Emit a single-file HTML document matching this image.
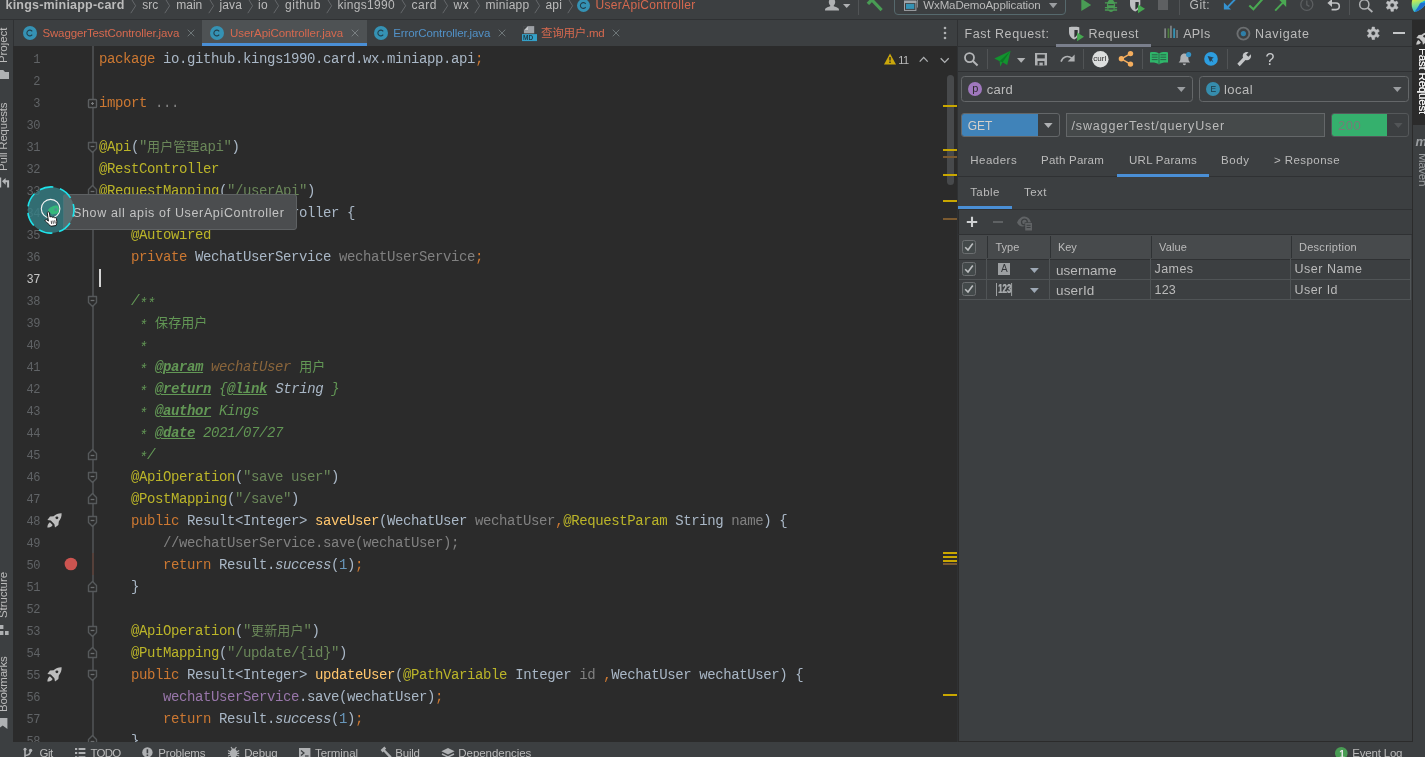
<!DOCTYPE html>
<html><head><meta charset="utf-8"><title>IDE</title><style>
html,body{margin:0;padding:0;background:#2b2b2b;}
body{width:1425px;height:757px;overflow:hidden;position:relative;font-family:"Liberation Sans","Noto Sans CJK SC",sans-serif;will-change:transform;}
.b{position:absolute;display:block}
.t{position:absolute;white-space:pre;display:block;line-height:30px}
svg{overflow:visible}

.cl{position:absolute;left:99px;height:22px;line-height:22px;white-space:pre;font-family:"Liberation Mono","Noto Sans CJK SC",monospace;font-size:14px;letter-spacing:-0.4px;color:#a9b7c6;}
.cl i{font-style:normal} .cl em.as{font-style:inherit;position:relative;top:3px} .cl b.z{font-weight:normal;font-style:normal;font-size:13px;letter-spacing:0.1px}
.cl .k{color:#cc7832} .cl .a{color:#bbb529} .cl .s{color:#6a8759} .cl .c{color:#808080} .cl .u{color:#808080}
.cl .d{color:#629755;font-style:italic} .cl .dt{color:#629755;font-style:italic;font-weight:bold;text-decoration:underline}
.cl .dp{color:#8a653b;font-style:italic} .cl .dl{color:#a9b7c6;font-style:italic}
.cl .m{color:#ffc66d} .cl .n{color:#6897bb} .cl .f{color:#9876aa} .cl .st{font-style:italic}
.ln{position:absolute;left:14px;width:26.2px;text-align:right;height:22px;line-height:22px;font-family:"Liberation Mono","Noto Sans CJK SC",monospace;font-size:12px;letter-spacing:-0.3px;color:#606366;white-space:pre}
</style></head>
<body>
<div class="b" style="left:14px;top:46px;width:944px;height:696px;background:#2b2b2b;"></div>
<div class="b" style="left:92.2px;top:46px;width:1.7px;height:696px;background:#484a4c;"></div>
<div class="b" style="left:92.2px;top:553px;width:1.7px;height:22px;background:#55403a;"></div>
<div class="ln" style="top:48.5px;color:#606366">1</div>
<div class="cl" style="top:48px"><i class="k">package </i>io.github.kings1990.card.wx.miniapp.api<i class="k">;</i></div>
<div class="ln" style="top:70.5px;color:#606366">2</div>
<div class="ln" style="top:92.5px;color:#606366">3</div>
<div class="cl" style="top:92px"><i class="k">import </i><i class="c">...</i></div>
<div class="ln" style="top:114.5px;color:#606366">30</div>
<div class="ln" style="top:136.5px;color:#606366">31</div>
<div class="cl" style="top:136px"><i class="a">@Api</i>(<i class="s">"<b class="z">用户管理</b>api"</i>)</div>
<div class="ln" style="top:158.5px;color:#606366">32</div>
<div class="cl" style="top:158px"><i class="a">@RestController</i></div>
<div class="ln" style="top:180.5px;color:#606366">33</div>
<div class="cl" style="top:180px"><i class="a">@RequestMapping</i>(<i class="s">"/userApi"</i>)</div>
<div class="ln" style="top:202.5px;color:#606366">34</div>
<div class="cl" style="top:202px"><i class="k">public class </i>UserApiController {</div>
<div class="ln" style="top:224.5px;color:#606366">35</div>
<div class="cl" style="top:224px">    <i class="a">@Autowired</i></div>
<div class="ln" style="top:246.5px;color:#606366">36</div>
<div class="cl" style="top:246px">    <i class="k">private </i>WechatUserService <i class="u">wechatUserService</i><i class="k">;</i></div>
<div class="ln" style="top:268.5px;color:#c4c4c4">37</div>
<div class="ln" style="top:290.5px;color:#606366">38</div>
<div class="cl" style="top:290px">    <i class="d">/<em class="as">*</em><em class="as">*</em></i></div>
<div class="ln" style="top:312.5px;color:#606366">39</div>
<div class="cl" style="top:312px">    <i class="d"> <em class="as">*</em> <b class="z">保存用户</b></i></div>
<div class="ln" style="top:334.5px;color:#606366">40</div>
<div class="cl" style="top:334px">    <i class="d"> <em class="as">*</em></i></div>
<div class="ln" style="top:356.5px;color:#606366">41</div>
<div class="cl" style="top:356px">    <i class="d"> <em class="as">*</em> </i><i class="dt">@param</i><i class="d"> </i><i class="dp">wechatUser</i><i class="d"> <b class="z">用户</b></i></div>
<div class="ln" style="top:378.5px;color:#606366">42</div>
<div class="cl" style="top:378px">    <i class="d"> <em class="as">*</em> </i><i class="dt">@return</i><i class="d"> {</i><i class="dt">@link</i><i class="d"> </i><i class="dl">String</i><i class="d"> }</i></div>
<div class="ln" style="top:400.5px;color:#606366">43</div>
<div class="cl" style="top:400px">    <i class="d"> <em class="as">*</em> </i><i class="dt">@author</i><i class="d"> Kings</i></div>
<div class="ln" style="top:422.5px;color:#606366">44</div>
<div class="cl" style="top:422px">    <i class="d"> <em class="as">*</em> </i><i class="dt">@date</i><i class="d"> 2021/07/27</i></div>
<div class="ln" style="top:444.5px;color:#606366">45</div>
<div class="cl" style="top:444px">    <i class="d"> <em class="as">*</em>/</i></div>
<div class="ln" style="top:466.5px;color:#606366">46</div>
<div class="cl" style="top:466px">    <i class="a">@ApiOperation</i>(<i class="s">"save user"</i>)</div>
<div class="ln" style="top:488.5px;color:#606366">47</div>
<div class="cl" style="top:488px">    <i class="a">@PostMapping</i>(<i class="s">"/save"</i>)</div>
<div class="ln" style="top:510.5px;color:#606366">48</div>
<div class="cl" style="top:510px">    <i class="k">public </i>Result&lt;Integer&gt; <i class="m">saveUser</i>(WechatUser <i class="u">wechatUser</i><i class="k">,</i><i class="a">@RequestParam</i> String <i class="u">name</i>) {</div>
<div class="ln" style="top:532.5px;color:#606366">49</div>
<div class="cl" style="top:532px">        <i class="c">//wechatUserService.save(wechatUser);</i></div>
<div class="ln" style="top:554.5px;color:#606366">50</div>
<div class="cl" style="top:554px">        <i class="k">return </i>Result.<i class="st">success</i>(<i class="n">1</i>)<i class="k">;</i></div>
<div class="ln" style="top:576.5px;color:#606366">51</div>
<div class="cl" style="top:576px">    }</div>
<div class="ln" style="top:598.5px;color:#606366">52</div>
<div class="ln" style="top:620.5px;color:#606366">53</div>
<div class="cl" style="top:620px">    <i class="a">@ApiOperation</i>(<i class="s">"<b class="z">更新用户</b>"</i>)</div>
<div class="ln" style="top:642.5px;color:#606366">54</div>
<div class="cl" style="top:642px">    <i class="a">@PutMapping</i>(<i class="s">"/update/{id}"</i>)</div>
<div class="ln" style="top:664.5px;color:#606366">55</div>
<div class="cl" style="top:664px">    <i class="k">public </i>Result&lt;Integer&gt; <i class="m">updateUser</i>(<i class="a">@PathVariable</i> Integer <i class="u">id</i> <i class="k">,</i>WechatUser wechatUser) {</div>
<div class="ln" style="top:686.5px;color:#606366">56</div>
<div class="cl" style="top:686px">        <i class="f">wechatUserService</i>.save(wechatUser)<i class="k">;</i></div>
<div class="ln" style="top:708.5px;color:#606366">57</div>
<div class="cl" style="top:708px">        <i class="k">return </i>Result.<i class="st">success</i>(<i class="n">1</i>)<i class="k">;</i></div>
<div class="ln" style="top:730.5px;color:#606366">58</div>
<div class="cl" style="top:730px">    }</div>
<div class="b" style="left:99.2px;top:269px;width:1.9px;height:18px;background:#d4d4d4;"></div>
<svg class="b" style="left:88.4px;top:99px;" width="9" height="9" viewBox="0 0 9 9"><rect x="0.5" y="0.5" width="8" height="8" rx="0.8" fill="#2b2b2b" stroke="#5c5f61" stroke-width="1.4"/><path d="M3 4.5H6M4.5 3V6" stroke="#77797b" stroke-width="1.2"/></svg>
<svg class="b" style="left:88.4px;top:142.3px;" width="9" height="11" viewBox="0 0 9 11"><path d="M0.5 0.5H8.5V6.5L4.5 10.5L0.5 6.5Z" fill="#2b2b2b" stroke="#56595b" stroke-width="1.4" stroke-linejoin="round"/><path d="M2.6 4.5H6.4" stroke="#6a6d6f" stroke-width="1.3"/></svg>
<svg class="b" style="left:88.4px;top:296.3px;" width="9" height="11" viewBox="0 0 9 11"><path d="M0.5 0.5H8.5V6.5L4.5 10.5L0.5 6.5Z" fill="#2b2b2b" stroke="#56595b" stroke-width="1.4" stroke-linejoin="round"/><path d="M2.6 4.5H6.4" stroke="#6a6d6f" stroke-width="1.3"/></svg>
<svg class="b" style="left:88.4px;top:472.3px;" width="9" height="11" viewBox="0 0 9 11"><path d="M0.5 0.5H8.5V6.5L4.5 10.5L0.5 6.5Z" fill="#2b2b2b" stroke="#56595b" stroke-width="1.4" stroke-linejoin="round"/><path d="M2.6 4.5H6.4" stroke="#6a6d6f" stroke-width="1.3"/></svg>
<svg class="b" style="left:88.4px;top:516.3px;" width="9" height="11" viewBox="0 0 9 11"><path d="M0.5 0.5H8.5V6.5L4.5 10.5L0.5 6.5Z" fill="#2b2b2b" stroke="#56595b" stroke-width="1.4" stroke-linejoin="round"/><path d="M2.6 4.5H6.4" stroke="#6a6d6f" stroke-width="1.3"/></svg>
<svg class="b" style="left:88.4px;top:626.3px;" width="9" height="11" viewBox="0 0 9 11"><path d="M0.5 0.5H8.5V6.5L4.5 10.5L0.5 6.5Z" fill="#2b2b2b" stroke="#56595b" stroke-width="1.4" stroke-linejoin="round"/><path d="M2.6 4.5H6.4" stroke="#6a6d6f" stroke-width="1.3"/></svg>
<svg class="b" style="left:88.4px;top:670.3px;" width="9" height="11" viewBox="0 0 9 11"><path d="M0.5 0.5H8.5V6.5L4.5 10.5L0.5 6.5Z" fill="#2b2b2b" stroke="#56595b" stroke-width="1.4" stroke-linejoin="round"/><path d="M2.6 4.5H6.4" stroke="#6a6d6f" stroke-width="1.3"/></svg>
<svg class="b" style="left:88.4px;top:184.5px;" width="9" height="11" viewBox="0 0 9 11"><path d="M0.5 10.5H8.5V4.5L4.5 0.5L0.5 4.5Z" fill="#2b2b2b" stroke="#56595b" stroke-width="1.4" stroke-linejoin="round"/><path d="M2.6 6.5H6.4" stroke="#6a6d6f" stroke-width="1.3"/></svg>
<svg class="b" style="left:88.4px;top:448.5px;" width="9" height="11" viewBox="0 0 9 11"><path d="M0.5 10.5H8.5V4.5L4.5 0.5L0.5 4.5Z" fill="#2b2b2b" stroke="#56595b" stroke-width="1.4" stroke-linejoin="round"/><path d="M2.6 6.5H6.4" stroke="#6a6d6f" stroke-width="1.3"/></svg>
<svg class="b" style="left:88.4px;top:492.5px;" width="9" height="11" viewBox="0 0 9 11"><path d="M0.5 10.5H8.5V4.5L4.5 0.5L0.5 4.5Z" fill="#2b2b2b" stroke="#56595b" stroke-width="1.4" stroke-linejoin="round"/><path d="M2.6 6.5H6.4" stroke="#6a6d6f" stroke-width="1.3"/></svg>
<svg class="b" style="left:88.4px;top:580.5px;" width="9" height="11" viewBox="0 0 9 11"><path d="M0.5 10.5H8.5V4.5L4.5 0.5L0.5 4.5Z" fill="#2b2b2b" stroke="#56595b" stroke-width="1.4" stroke-linejoin="round"/><path d="M2.6 6.5H6.4" stroke="#6a6d6f" stroke-width="1.3"/></svg>
<svg class="b" style="left:88.4px;top:646.5px;" width="9" height="11" viewBox="0 0 9 11"><path d="M0.5 10.5H8.5V4.5L4.5 0.5L0.5 4.5Z" fill="#2b2b2b" stroke="#56595b" stroke-width="1.4" stroke-linejoin="round"/><path d="M2.6 6.5H6.4" stroke="#6a6d6f" stroke-width="1.3"/></svg>
<svg class="b" style="left:88.4px;top:734.5px;" width="9" height="11" viewBox="0 0 9 11"><path d="M0.5 10.5H8.5V4.5L4.5 0.5L0.5 4.5Z" fill="#2b2b2b" stroke="#56595b" stroke-width="1.4" stroke-linejoin="round"/><path d="M2.6 6.5H6.4" stroke="#6a6d6f" stroke-width="1.3"/></svg>
<svg class="b" style="left:46.6px;top:512.6px;" width="15" height="15" viewBox="0 0 15 15"><path d="M14.6 0.3C11.5 0.2 8.8 1.2 6.6 3.2L3 3.6L0.4 7L3.8 7.6L7.4 11.2L8 14.6L11.4 12L11.8 8.4C13.8 6.2 14.8 3.4 14.6 0.3Z" fill="#bdbdbd"/><circle cx="9.9" cy="4.85" r="1.45" fill="#2b2b2b"/><path d="M2.9 9.2L5.6 12C4.8 13.8 2.6 14.5 0.3 14.6C0.4 12.2 1.2 10.2 2.9 9.2Z" fill="#bdbdbd"/></svg>
<svg class="b" style="left:46.6px;top:666.6px;" width="15" height="15" viewBox="0 0 15 15"><path d="M14.6 0.3C11.5 0.2 8.8 1.2 6.6 3.2L3 3.6L0.4 7L3.8 7.6L7.4 11.2L8 14.6L11.4 12L11.8 8.4C13.8 6.2 14.8 3.4 14.6 0.3Z" fill="#bdbdbd"/><circle cx="9.9" cy="4.85" r="1.45" fill="#2b2b2b"/><path d="M2.9 9.2L5.6 12C4.8 13.8 2.6 14.5 0.3 14.6C0.4 12.2 1.2 10.2 2.9 9.2Z" fill="#bdbdbd"/></svg>
<svg class="b" style="left:64px;top:557px;" width="14" height="14" viewBox="0 0 14 14"><circle cx="6.9" cy="7" r="6.3" fill="#cc5450"/></svg>
<div class="b" style="left:947px;top:75px;width:7.3px;height:110px;background:#47494b;border-radius:3.6px;"></div>
<div class="b" style="left:943px;top:105px;width:14px;height:2px;background:#c9a700;"></div>
<div class="b" style="left:943px;top:149px;width:14px;height:2px;background:#c9a700;"></div>
<div class="b" style="left:943px;top:156px;width:14px;height:2px;background:#7b5a30;"></div>
<div class="b" style="left:943px;top:174px;width:14px;height:2px;background:#c9a700;"></div>
<div class="b" style="left:943px;top:200px;width:14px;height:2px;background:#c9a700;"></div>
<div class="b" style="left:943px;top:218px;width:14px;height:2px;background:#7b5a30;"></div>
<div class="b" style="left:943px;top:552px;width:14px;height:2px;background:#c9a700;"></div>
<div class="b" style="left:943px;top:556px;width:14px;height:2px;background:#c9a700;"></div>
<div class="b" style="left:943px;top:560px;width:14px;height:2px;background:#c9a700;"></div>
<div class="b" style="left:943px;top:563px;width:14px;height:2px;background:#7b5a30;"></div>
<div class="b" style="left:943px;top:694px;width:14px;height:2px;background:#c9a700;"></div>
<svg class="b" style="left:884px;top:53px;" width="12" height="12" viewBox="0 0 12 12"><path d="M6 0.6L12 11.4H0Z" fill="#cba70b"/><path d="M6 4V7.6M6 8.6V10" stroke="#2b2b2b" stroke-width="1.4"/></svg>
<span class="t" style="left:898.20px;top:45px;font-size:11px;color:#bbbbbb;letter-spacing:-0.6px;">11</span>
<svg class="b" style="left:918.3px;top:55px;" width="12" height="8" viewBox="0 0 12 8"><path d="M1.7 6.6L5.7 2.4L9.7 6.6" fill="none" stroke="#afb1b3" stroke-width="1.3"/></svg>
<svg class="b" style="left:939.3px;top:56px;" width="12" height="8" viewBox="0 0 12 8"><path d="M1.7 2.2L5.7 6.4L9.7 2.2" fill="none" stroke="#afb1b3" stroke-width="1.3"/></svg>
<div class="b" style="left:0px;top:0px;width:1425px;height:20px;background:#3c3f41;"></div>
<div class="b" style="left:0px;top:19px;width:1425px;height:1px;background:#2f3133;"></div>
<span class="t" style="left:5.50px;top:-10px;font-size:12.5px;color:#bbbbbb;letter-spacing:0.206px;font-weight:bold;">kings-miniapp-card</span>
<span class="t" style="left:142.30px;top:-10px;font-size:12px;color:#bbbbbb;letter-spacing:0.000px;">src</span>
<span class="t" style="left:176.30px;top:-10px;font-size:12px;color:#bbbbbb;letter-spacing:-0.004px;">main</span>
<span class="t" style="left:219.50px;top:-10px;font-size:12px;color:#bbbbbb;letter-spacing:0.121px;">java</span>
<span class="t" style="left:258.00px;top:-10px;font-size:12px;color:#bbbbbb;letter-spacing:0.328px;">io</span>
<span class="t" style="left:285.00px;top:-10px;font-size:12px;color:#bbbbbb;letter-spacing:0.549px;">github</span>
<span class="t" style="left:337.50px;top:-10px;font-size:12px;color:#bbbbbb;letter-spacing:0.309px;">kings1990</span>
<span class="t" style="left:411.50px;top:-10px;font-size:12px;color:#bbbbbb;letter-spacing:0.539px;">card</span>
<span class="t" style="left:453.50px;top:-10px;font-size:12px;color:#bbbbbb;letter-spacing:0.664px;">wx</span>
<span class="t" style="left:485.50px;top:-10px;font-size:12px;color:#bbbbbb;letter-spacing:0.281px;">miniapp</span>
<span class="t" style="left:545.50px;top:-10px;font-size:12px;color:#bbbbbb;letter-spacing:0.161px;">api</span>
<svg class="b" style="left:129.5px;top:-1px;" width="7" height="15" viewBox="0 0 7 15"><path d="M0.8 -1L5.6 6.8L0.8 14.2" fill="none" stroke="#64676a" stroke-width="1"/></svg>
<svg class="b" style="left:163.5px;top:-1px;" width="7" height="15" viewBox="0 0 7 15"><path d="M0.8 -1L5.6 6.8L0.8 14.2" fill="none" stroke="#64676a" stroke-width="1"/></svg>
<svg class="b" style="left:207.5px;top:-1px;" width="7" height="15" viewBox="0 0 7 15"><path d="M0.8 -1L5.6 6.8L0.8 14.2" fill="none" stroke="#64676a" stroke-width="1"/></svg>
<svg class="b" style="left:247px;top:-1px;" width="7" height="15" viewBox="0 0 7 15"><path d="M0.8 -1L5.6 6.8L0.8 14.2" fill="none" stroke="#64676a" stroke-width="1"/></svg>
<svg class="b" style="left:273px;top:-1px;" width="7" height="15" viewBox="0 0 7 15"><path d="M0.8 -1L5.6 6.8L0.8 14.2" fill="none" stroke="#64676a" stroke-width="1"/></svg>
<svg class="b" style="left:326px;top:-1px;" width="7" height="15" viewBox="0 0 7 15"><path d="M0.8 -1L5.6 6.8L0.8 14.2" fill="none" stroke="#64676a" stroke-width="1"/></svg>
<svg class="b" style="left:400px;top:-1px;" width="7" height="15" viewBox="0 0 7 15"><path d="M0.8 -1L5.6 6.8L0.8 14.2" fill="none" stroke="#64676a" stroke-width="1"/></svg>
<svg class="b" style="left:442px;top:-1px;" width="7" height="15" viewBox="0 0 7 15"><path d="M0.8 -1L5.6 6.8L0.8 14.2" fill="none" stroke="#64676a" stroke-width="1"/></svg>
<svg class="b" style="left:474px;top:-1px;" width="7" height="15" viewBox="0 0 7 15"><path d="M0.8 -1L5.6 6.8L0.8 14.2" fill="none" stroke="#64676a" stroke-width="1"/></svg>
<svg class="b" style="left:534px;top:-1px;" width="7" height="15" viewBox="0 0 7 15"><path d="M0.8 -1L5.6 6.8L0.8 14.2" fill="none" stroke="#64676a" stroke-width="1"/></svg>
<svg class="b" style="left:567px;top:-1px;" width="7" height="15" viewBox="0 0 7 15"><path d="M0.8 -1L5.6 6.8L0.8 14.2" fill="none" stroke="#64676a" stroke-width="1"/></svg>
<svg class="b" style="left:577.0px;top:-1.5px;" width="13.0" height="13.0" viewBox="0 0 13.0 13.0"><circle cx="6.5" cy="6.5" r="6.5" fill="#3592b4"/><path d="M8.7 4.9A2.9 2.9 0 1 0 8.7 8.1" fill="none" stroke="#23404d" stroke-width="1.1"/></svg>
<span class="t" style="left:595.50px;top:-10px;font-size:12px;color:#d6694f;letter-spacing:0.312px;">UserApiController</span>
<svg class="b" style="left:824px;top:-2px;" width="16" height="13" viewBox="0 0 16 13"><path d="M8 0.5C10 0.5 11.2 2 11.2 4C11.2 5.4 10.6 6.6 9.8 7.3V8.2C11.5 8.8 14 9.6 14.6 10.6C15 11.3 15 12 15 12.5H1C1 12 1 11.3 1.4 10.6C2 9.6 4.5 8.8 6.2 8.2V7.3C5.4 6.6 4.8 5.4 4.8 4C4.8 2 6 0.5 8 0.5Z" fill="#afb1b3"/></svg>
<svg class="b" style="left:843px;top:4px;" width="8" height="4" viewBox="0 0 8 4"><path d="M0 0H7.4L3.7 4Z" fill="#afb1b3"/></svg>
<div class="b" style="left:858px;top:0px;width:1px;height:15px;background:#515456;"></div>
<svg class="b" style="left:866px;top:-2px;" width="17" height="15" viewBox="0 0 17 15"><path d="M5 1L15.6 12.1" stroke="#499c54" stroke-width="3.1" fill="none"/><path d="M1.9 5.9L7.4 0.2" stroke="#499c54" stroke-width="3.4" fill="none"/></svg>
<div class="b" style="left:893.5px;top:-6px;width:172px;height:21px;border:1px solid #56696d;border-radius:4px;box-sizing:border-box;"></div>
<svg class="b" style="left:904px;top:-2px;" width="15" height="14" viewBox="0 0 15 14"><rect x="0.5" y="3.2" width="11.4" height="9.2" fill="none" stroke="#a0a4a8" stroke-width="1"/><rect x="0" y="2.7" width="12.4" height="2.4" fill="#a0a4a8"/><rect x="2" y="5.9" width="8.3" height="5" fill="#3592b4"/><path d="M13.5 0V9.6" stroke="#8a8e92" stroke-width="0.9"/></svg>
<span class="t" style="left:923.30px;top:-10px;font-size:11.5px;color:#bbbbbb;letter-spacing:-0.122px;">WxMaDemoApplication</span>
<svg class="b" style="left:1048.5px;top:3px;" width="9" height="6" viewBox="0 0 9 6"><path d="M0 0H8.4L4.2 5.2Z" fill="#9a9da0"/></svg>
<svg class="b" style="left:1080.5px;top:-2px;" width="11" height="14" viewBox="0 0 11 14"><path d="M0.3 0.6L10.2 7L0.3 13.1Z" fill="#499c54"/></svg>
<svg class="b" style="left:1104px;top:-1px;" width="14" height="14" viewBox="0 0 14 14"><ellipse cx="7" cy="6.6" rx="4.1" ry="6.3" fill="#499c54"/><path d="M0.9 3.9H13.1M0.9 8.6H13.1M0.9 11H13.1" stroke="#499c54" stroke-width="1.3"/><path d="M4.2 5.7H9.8M4.4 9.85H9.6" stroke="#3c3f41" stroke-width="1.2"/></svg>
<svg class="b" style="left:1130px;top:-1.2px;" width="16" height="15" viewBox="0 0 16 15"><path d="M0 0.3C3 -0.3 7 -0.3 10.3 0.3V5C10.3 9 7.5 11.5 5.2 12.4C2.5 11.5 0 9 0 5Z" fill="#bdbfc1"/><path d="M5.4 2.9H8.7V5.5C8.7 8 7.2 9.6 5.4 10.6Z" fill="#2f3234"/><path d="M8 5.4L15 9.7L8 14.2Z" fill="#45a850"/></svg>
<div class="b" style="left:1158px;top:-1px;width:10px;height:11px;background:#5e6062;"></div>
<div class="b" style="left:1179px;top:0px;width:1px;height:15px;background:#515456;"></div>
<span class="t" style="left:1189.60px;top:-10px;font-size:12px;color:#bbbbbb;letter-spacing:0.457px;">Git:</span>
<svg class="b" style="left:1223px;top:-2px;" width="13" height="13" viewBox="0 0 13 13"><path d="M12.4 1L4.6 9.2" fill="none" stroke="#3592d0" stroke-width="1.9"/><path d="M0.9 11.6V4.6L8 11.6Z" fill="#3592d0"/></svg>
<svg class="b" style="left:1248px;top:-2px;" width="15" height="13" viewBox="0 0 15 13"><path d="M1.3 7.4L5.4 11.2L14.4 1.2" fill="none" stroke="#4aa852" stroke-width="2.1"/></svg>
<svg class="b" style="left:1274px;top:-2px;" width="13" height="14" viewBox="0 0 13 14"><path d="M1.2 12.6L9.6 3.8" fill="none" stroke="#4aa852" stroke-width="1.9"/><path d="M5 1.6H12.2V8.9Z" fill="#4aa852"/></svg>
<svg class="b" style="left:1300px;top:-2px;" width="15" height="15" viewBox="0 0 15 15"><circle cx="6.8" cy="6.4" r="6" fill="none" stroke="#5c5f61" stroke-width="1.3"/><path d="M6.8 2.6V6.8L9.4 8.4" fill="none" stroke="#5c5f61" stroke-width="1.3"/></svg>
<svg class="b" style="left:1326px;top:-2px;" width="15" height="14" viewBox="0 0 15 14"><path d="M4 5H10A3.3 3.3 0 0 1 10 11.6H5.6" fill="none" stroke="#c0c2c4" stroke-width="1.6"/><path d="M1.4 5L6 1V9Z" fill="#c0c2c4"/></svg>
<div class="b" style="left:1349px;top:0px;width:1px;height:15px;background:#515456;"></div>
<svg class="b" style="left:1357px;top:-2px;" width="17" height="16" viewBox="0 0 17 16"><circle cx="7.3" cy="6.4" r="4.6" fill="none" stroke="#afb1b3" stroke-width="1.5"/><path d="M10.6 9.8L15.4 14" stroke="#afb1b3" stroke-width="1.8"/></svg>
<svg class="b" style="left:1384.7px;top:-1.9px;" width="14.4" height="14.4" viewBox="0 0 14.4 14.4"><path d="M8.43 13.28L5.97 13.28L5.86 11.33L4.30 10.43L2.55 11.30L1.32 9.18L2.95 8.10L2.95 6.30L1.32 5.22L2.55 3.10L4.30 3.97L5.86 3.07L5.97 1.12L8.43 1.12L8.54 3.07L10.10 3.97L11.85 3.10L13.08 5.22L11.45 6.30L11.45 8.10L13.08 9.18L11.85 11.30L10.10 10.43L8.54 11.33ZM9.43 7.20A2.23 2.23 0 1 0 4.97 7.20A2.23 2.23 0 1 0 9.43 7.20Z" fill="#bfc1c3" fill-rule="evenodd" stroke="#bfc1c3" stroke-width="0.6" stroke-linejoin="round"/></svg>
<svg class="b" style="left:1411px;top:-2px;" width="14" height="15" viewBox="0 0 14 15"><defs><linearGradient id="lg" x1="0.3" y1="0" x2="0.5" y2="1"><stop offset="0" stop-color="#e6f03c"/><stop offset="0.5" stop-color="#7fdc8c"/><stop offset="1" stop-color="#22b8e6"/></linearGradient></defs><path d="M2 0C-0.2 4.5 0.4 10 3.2 14C7.5 13.4 11.5 10.5 14 7V0Z" fill="url(#lg)"/><path d="M9 5.2L14 3V7C11.6 10.4 7.6 13.2 3.4 14C5.4 11.4 7.6 8.4 9 5.2Z" fill="#1e6fd0"/><path d="M9 5.2L14 2.4V4.6Z" fill="#18b4e4"/></svg>
<div class="b" style="left:0px;top:20px;width:958px;height:26px;background:#3c3f41;"></div>
<div class="b" style="left:13px;top:20px;width:1px;height:26px;background:#2f3133;"></div>
<div class="b" style="left:202px;top:20px;width:165px;height:26px;background:#4e5254;"></div>
<div class="b" style="left:202px;top:43px;width:165px;height:3px;background:#4a8fd6;"></div>
<svg class="b" style="left:23px;top:26.200000000000003px;" width="14" height="14" viewBox="0 0 14 14"><circle cx="7" cy="7" r="7" fill="#3592b4"/><path d="M9.2 5.4A2.9 2.9 0 1 0 9.2 8.6" fill="none" stroke="#23404d" stroke-width="1.1"/></svg>
<span class="t" style="left:42.40px;top:18px;font-size:11.5px;color:#d6694f;letter-spacing:-0.123px;">SwaggerTestController.java</span>
<svg class="b" style="left:187px;top:29.200000000000003px;" width="8" height="8" viewBox="0 0 8 8"><path d="M0.7 0.7L7.3 7.3M7.3 0.7L0.7 7.3" stroke="#6e7678" stroke-width="1" fill="none"/></svg>
<svg class="b" style="left:210px;top:26.200000000000003px;" width="14" height="14" viewBox="0 0 14 14"><circle cx="7" cy="7" r="7" fill="#3592b4"/><path d="M9.2 5.4A2.9 2.9 0 1 0 9.2 8.6" fill="none" stroke="#23404d" stroke-width="1.1"/></svg>
<span class="t" style="left:230.00px;top:18px;font-size:11.5px;color:#d6694f;letter-spacing:-0.065px;">UserApiController.java</span>
<svg class="b" style="left:350.5px;top:29.200000000000003px;" width="8" height="8" viewBox="0 0 8 8"><path d="M0.7 0.7L7.3 7.3M7.3 0.7L0.7 7.3" stroke="#7a8082" stroke-width="1" fill="none"/></svg>
<svg class="b" style="left:374px;top:26.200000000000003px;" width="14" height="14" viewBox="0 0 14 14"><circle cx="7" cy="7" r="7" fill="#3592b4"/><path d="M9.2 5.4A2.9 2.9 0 1 0 9.2 8.6" fill="none" stroke="#23404d" stroke-width="1.1"/></svg>
<span class="t" style="left:393.30px;top:18px;font-size:11.5px;color:#5292c8;letter-spacing:-0.104px;">ErrorController.java</span>
<svg class="b" style="left:498px;top:29.200000000000003px;" width="8" height="8" viewBox="0 0 8 8"><path d="M0.7 0.7L7.3 7.3M7.3 0.7L0.7 7.3" stroke="#6e7678" stroke-width="1" fill="none"/></svg>
<svg class="b" style="left:522px;top:25.8px;" width="16" height="16" viewBox="0 0 16 16"><path d="M1.9 0.1H12.2V7.3H1.9Z" fill="#9da1a6"/><path d="M1.9 0.1H6V4.2H1.9Z" fill="#3c3f41"/><path d="M6 0.1V4.2H1.9Z" fill="#c2c5c8"/><rect x="0" y="8.1" width="15" height="7" fill="#34a0c8"/></svg><span class="t" style="left:523.00px;top:23px;font-size:6.5px;color:#1e3a46;letter-spacing:0.195px;font-weight:bold;">MD</span>
<span class="t" style="left:541.00px;top:18px;font-size:11.5px;color:#d6694f;letter-spacing:-0.239px;">查询用户.md</span>
<svg class="b" style="left:612px;top:29.200000000000003px;" width="8" height="8" viewBox="0 0 8 8"><path d="M0.7 0.7L7.3 7.3M7.3 0.7L0.7 7.3" stroke="#6e7678" stroke-width="1" fill="none"/></svg>
<svg class="b" style="left:943px;top:26px;" width="4" height="14" viewBox="0 0 4 14"><circle cx="2" cy="2" r="1.3" fill="#afb1b3"/><circle cx="2" cy="7" r="1.3" fill="#afb1b3"/><circle cx="2" cy="12" r="1.3" fill="#afb1b3"/></svg>
<div class="b" style="left:0px;top:46px;width:13px;height:696px;background:#3c3f41;"></div>
<div class="b" style="left:0;top:0;width:13px;height:742px;overflow:hidden">
<span class="t" style="left:-3.98px;top:63.30px;font-size:11.5px;line-height:15px;color:#bbbbbb;letter-spacing:-0.071px;transform-origin:0 0;transform:rotate(-90deg);">Project</span>
<svg class="b" style="left:0px;top:70px;" width="10" height="9" viewBox="0 0 10 9"><path d="M-4 0H3.2L5 2H9V9H-4Z" fill="#afb1b3"/></svg>
<span class="t" style="left:-4.08px;top:171.40px;font-size:11.5px;line-height:15px;color:#bbbbbb;letter-spacing:-0.213px;transform-origin:0 0;transform:rotate(-90deg);">Pull Requests</span>
<svg class="b" style="left:0px;top:177px;" width="10" height="11" viewBox="0 0 10 11"><path d="M0.2 0.4V10.6" stroke="#b6b8ba" stroke-width="2" fill="none"/><path d="M8.1 10.6V4.3H4.6" stroke="#b6b8ba" stroke-width="2" fill="none"/><path d="M2 4.3L5.6 0.9V7.7Z" fill="#b6b8ba"/></svg>
<span class="t" style="left:-4.08px;top:618.20px;font-size:11.5px;line-height:15px;color:#bbbbbb;letter-spacing:-0.075px;transform-origin:0 0;transform:rotate(-90deg);">Structure</span>
<svg class="b" style="left:0px;top:624.5px;" width="9" height="10" viewBox="0 0 9 10"><rect x="0" y="0" width="3.4" height="4" fill="#afb1b3"/><rect x="0" y="6" width="3.4" height="4" fill="#afb1b3"/><rect x="5" y="6" width="3.6" height="4" fill="#afb1b3"/></svg>
<span class="t" style="left:-4.08px;top:712.00px;font-size:11.5px;line-height:15px;color:#bbbbbb;letter-spacing:-0.226px;transform-origin:0 0;transform:rotate(-90deg);">Bookmarks</span>
<svg class="b" style="left:0px;top:718px;" width="9" height="12" viewBox="0 0 9 12"><path d="M-2 0H7.4V11L2.7 7.4L-2 11Z" fill="#afb1b3"/></svg>
</div>
<div class="b" style="left:957px;top:20px;width:1px;height:722px;background:#2f3133;"></div>
<div class="b" style="left:958px;top:20px;width:454px;height:722px;background:#3c3f41;"></div>
<div class="b" style="left:958px;top:210px;width:1px;height:532px;background:#2b2b2b;"></div>
<div class="b" style="left:958px;top:740.5px;width:454px;height:1.5px;background:#2b2b2b;"></div>
<div class="b" style="left:958px;top:46px;width:454px;height:1px;background:#2f3133;"></div>
<span class="t" style="left:964.50px;top:19px;font-size:12.5px;color:#bbbbbb;letter-spacing:0.552px;">Fast Request:</span>
<div class="b" style="left:1056px;top:44px;width:95px;height:3px;background:#7a7f8c;"></div>
<svg class="b" style="left:1068.9px;top:26.75px;" width="16" height="15" viewBox="0 0 16 15"><path d="M0 0.3C3 -0.3 7 -0.3 10.3 0.3V5C10.3 9 7.5 11.5 5.2 12.4C2.5 11.5 0 9 0 5Z" fill="#bdbfc1"/><path d="M5.4 2.9H8.7V5.5C8.7 8 7.2 9.6 5.4 10.6Z" fill="#2f3234"/><path d="M8.1 5.4L15 9.7L8.1 14.2Z" fill="#45a850"/></svg>
<span class="t" style="left:1088.50px;top:19px;font-size:12.5px;color:#bbbbbb;letter-spacing:0.562px;">Request</span>
<svg class="b" style="left:1164px;top:25px;" width="15" height="14" viewBox="0 0 15 14"><rect x="0.3" y="3.4" width="1.7" height="9.6" fill="#7f8385"/><rect x="3.6" y="3.4" width="1.7" height="9.6" fill="#4e7d3e"/><rect x="6.1" y="0.7" width="1.7" height="12.3" fill="#7f8385"/><rect x="9.2" y="3.4" width="1.9" height="9.6" fill="#3592b4"/><rect x="12.3" y="5" width="1.5" height="8" fill="#7f8385"/></svg>
<span class="t" style="left:1183.20px;top:19px;font-size:12.5px;color:#bbbbbb;letter-spacing:0.198px;">APIs</span>
<svg class="b" style="left:1235.5px;top:25.5px;" width="15" height="15" viewBox="0 0 15 15"><circle cx="7.4" cy="7.6" r="6" fill="none" stroke="#6c6f71" stroke-width="1.9"/><circle cx="7.4" cy="7.6" r="2.6" fill="#2f7fa8"/></svg>
<span class="t" style="left:1255.00px;top:19px;font-size:12.5px;color:#bbbbbb;letter-spacing:0.657px;">Navigate</span>
<svg class="b" style="left:1365.6px;top:25.9px;" width="14.6" height="14.6" viewBox="0 0 14.6 14.6"><path d="M8.55 13.48L6.05 13.48L5.94 11.49L4.35 10.58L2.57 11.47L1.33 9.31L2.99 8.22L2.99 6.38L1.33 5.29L2.57 3.13L4.35 4.02L5.94 3.11L6.05 1.12L8.55 1.12L8.66 3.11L10.25 4.02L12.03 3.13L13.27 5.29L11.61 6.38L11.61 8.22L13.27 9.31L12.03 11.47L10.25 10.58L8.66 11.49ZM9.57 7.30A2.27 2.27 0 1 0 5.03 7.30A2.27 2.27 0 1 0 9.57 7.30Z" fill="#bfc1c3" fill-rule="evenodd" stroke="#bfc1c3" stroke-width="0.6" stroke-linejoin="round"/></svg>
<div class="b" style="left:1393px;top:31.9px;width:12.1px;height:2.2px;background:#c4c6c8;"></div>
<div class="b" style="left:958px;top:71px;width:454px;height:1px;background:#2f3133;"></div>
<svg class="b" style="left:963px;top:51px;" width="17" height="17" viewBox="0 0 17 17"><circle cx="6.5" cy="6.6" r="4.5" fill="none" stroke="#b4b6b8" stroke-width="1.8"/><path d="M9.9 10.1L14.6 14.4" stroke="#b4b6b8" stroke-width="2"/></svg>
<div class="b" style="left:987px;top:49px;width:1px;height:20px;background:#515456;"></div>
<div class="b" style="left:1083px;top:49px;width:1px;height:20px;background:#515456;"></div>
<div class="b" style="left:1142px;top:49px;width:1px;height:20px;background:#515456;"></div>
<div class="b" style="left:1227px;top:49px;width:1px;height:20px;background:#515456;"></div>
<svg class="b" style="left:994px;top:50px;" width="18" height="18" viewBox="0 0 18 18"><path d="M0.3 8.6L16.6 0.8L13.2 15L8.6 12.2L6.2 16.8L5.6 11.2Z" fill="#13922f"/><path d="M5.6 11.2L16.6 0.8L8.6 12.2" fill="#0b7a24"/></svg>
<svg class="b" style="left:1016.5px;top:57.5px;" width="9" height="5" viewBox="0 0 9 5"><path d="M0 0H8.4L4.2 4.8Z" fill="#afb1b3"/></svg>
<svg class="b" style="left:1035px;top:52.5px;" width="13" height="13" viewBox="0 0 13 13"><path d="M0 0H12V12.4H0Z" fill="#afb1b3"/><rect x="2.2" y="1.6" width="7.6" height="3.8" fill="#3c3f41"/><rect x="2.6" y="8" width="6.8" height="4.4" fill="#3c3f41"/><rect x="4.4" y="9.6" width="3.4" height="2.8" fill="#afb1b3"/></svg>
<svg class="b" style="left:1060px;top:53px;" width="16" height="10" viewBox="0 0 16 10"><path d="M1 8.6C3 3.4 8 2 12 5.4" fill="none" stroke="#afb1b3" stroke-width="1.6"/><path d="M14.6 1.4V8.6H7.6Z" fill="#afb1b3"/></svg>
<svg class="b" style="left:1091.5px;top:50.5px;" width="17" height="17" viewBox="0 0 17 17"><circle cx="8.4" cy="8.3" r="8.2" fill="#dcdede"/></svg>
<span class="t" style="left:1093.20px;top:44px;font-size:8px;color:#2b2b2b;letter-spacing:0.027px;">curl</span>
<svg class="b" style="left:1117px;top:50px;" width="18" height="18" viewBox="0 0 18 18"><path d="M4.4 8.8L13.5 3.6M4.4 8.8L13.5 14.1" stroke="#f5ae5e" stroke-width="1.5"/><circle cx="4.4" cy="8.8" r="2.7" fill="#f5ae5e"/><circle cx="13.5" cy="3.6" r="2.7" fill="#f5ae5e"/><circle cx="13.5" cy="14.1" r="2.7" fill="#f5ae5e"/></svg>
<svg class="b" style="left:1150px;top:52px;" width="18" height="13" viewBox="0 0 18 13"><path d="M0 0.4C3 -0.2 6.6 0 9 1.4C11.4 0 15 -0.2 18 0.4V10.6C15 10.2 11.4 10.6 9 12.4C6.6 10.6 3 10.2 0 10.6Z" fill="#2fb56a"/><path d="M1.8 2.8H7.6M1.8 5.2H7.6M1.8 7.6H7.6M10.4 2.8H16.2M10.4 5.2H16.2M10.4 7.6H16.2" stroke="#2a5a44" stroke-width="0.9"/><path d="M9 1.4V12" stroke="#2a5a44" stroke-width="0.8"/></svg>
<svg class="b" style="left:1178px;top:52px;" width="14" height="14" viewBox="0 0 14 14"><path d="M6.4 1.4C3.6 1.4 2.4 3.8 2.4 6.2C2.4 8.6 1.6 9.6 0.6 10.4H12.2C11.2 9.6 10.4 8.6 10.4 6.2C10.4 3.8 9.2 1.4 6.4 1.4Z" fill="#afb1b3"/><path d="M4.8 11.6H8A1.6 1.6 0 0 1 4.8 11.6Z" fill="#afb1b3"/><circle cx="10.6" cy="2.6" r="2.6" fill="#3592c4"/></svg>
<svg class="b" style="left:1204px;top:52px;" width="14" height="14" viewBox="0 0 14 14"><circle cx="7" cy="6.9" r="6.8" fill="#2d9ee0"/><path d="M3.6 4L9.8 5.6L7.8 7L9.4 10.6L7.4 8.4L6 10Z" fill="#2b4254"/></svg>
<svg class="b" style="left:1236px;top:51px;" width="17" height="17" viewBox="0 0 17 17"><path d="M1.3 12.87L3.7 15.13L10.9 7.5L8.4 5.2Z" fill="#c4c6c8"/><circle cx="10.9" cy="5.1" r="4.2" fill="#c4c6c8"/><path d="M11.3 4.7L15.6 0.1" stroke="#3c3f41" stroke-width="3.1"/></svg>
<span class="t" style="left:1265.40px;top:45px;font-size:16px;color:#c8cacc;">?</span>
<div class="b" style="left:961px;top:76px;width:232px;height:26px;border:1px solid #646769;border-radius:3.5px;box-sizing:border-box;"></div>
<svg class="b" style="left:968px;top:82px;" width="14" height="14" viewBox="0 0 14 14"><circle cx="7" cy="7" r="7" fill="#a078be"/></svg>
<span class="t" style="left:972.20px;top:73px;font-size:11px;color:#2b2b2b;">p</span>
<span class="t" style="left:986.70px;top:75px;font-size:13px;color:#bbbbbb;letter-spacing:0.251px;">card</span>
<svg class="b" style="left:1177px;top:87px;" width="9" height="5" viewBox="0 0 9 5"><path d="M0 0H8.6L4.3 5Z" fill="#9a9da0"/></svg>
<div class="b" style="left:1199px;top:76px;width:210px;height:26px;border:1px solid #646769;border-radius:3.5px;box-sizing:border-box;"></div>
<svg class="b" style="left:1205.5px;top:82px;" width="14" height="14" viewBox="0 0 14 14"><circle cx="7" cy="7" r="7" fill="#368dad"/></svg>
<span class="t" style="left:1210.40px;top:74px;font-size:8.5px;color:#1d3540;">E</span>
<span class="t" style="left:1224.00px;top:75px;font-size:13px;color:#bbbbbb;letter-spacing:0.450px;">local</span>
<svg class="b" style="left:1393px;top:87px;" width="9" height="5" viewBox="0 0 9 5"><path d="M0 0H8.6L4.3 5Z" fill="#9a9da0"/></svg>
<div class="b" style="left:961px;top:113px;width:99px;height:23.7px;border:1px solid #646769;border-radius:3.5px;box-sizing:border-box;border-radius:3px;"></div>
<div class="b" style="left:962px;top:114px;width:76px;height:21.7px;background:#4083b9;border-radius:2px 0 0 2px;"></div>
<span class="t" style="left:967.70px;top:111px;font-size:12px;color:#d5d0ca;letter-spacing:-0.057px;">GET</span>
<svg class="b" style="left:1044px;top:122.5px;" width="9" height="5" viewBox="0 0 9 5"><path d="M0 0H8.6L4.3 5Z" fill="#afb1b3"/></svg>
<div class="b" style="left:1066px;top:113px;width:259px;height:23.7px;background:#45494a;border:1px solid #646769;box-sizing:border-box;"></div>
<span class="t" style="left:1071.50px;top:111px;font-size:12.5px;color:#bbbbbb;letter-spacing:0.851px;">/swaggerTest/queryUser</span>
<div class="b" style="left:1331px;top:113px;width:78px;height:23.7px;border:1px solid #646769;border-radius:3.5px;box-sizing:border-box;border-radius:3px;border-color:#55585a;"></div>
<div class="b" style="left:1332px;top:114px;width:55px;height:21.7px;background:#35b06d;border-radius:2px 0 0 2px;"></div>
<span class="t" style="left:1337.90px;top:111px;font-size:13px;color:#777b78;letter-spacing:0.532px;">200</span>
<svg class="b" style="left:1394px;top:122.5px;" width="9" height="5" viewBox="0 0 9 5"><path d="M0 0H8.6L4.3 5Z" fill="#525557"/></svg>
<span class="t" style="left:970.20px;top:145px;font-size:11.5px;color:#bbbbbb;letter-spacing:0.504px;">Headers</span>
<span class="t" style="left:1041.00px;top:145px;font-size:11.5px;color:#bbbbbb;letter-spacing:0.227px;">Path Param</span>
<span class="t" style="left:1129.00px;top:145px;font-size:11.5px;color:#bbbbbb;letter-spacing:0.259px;">URL Params</span>
<span class="t" style="left:1221.00px;top:145px;font-size:11.5px;color:#bbbbbb;letter-spacing:0.570px;">Body</span>
<span class="t" style="left:1274.00px;top:145px;font-size:11.5px;color:#bbbbbb;letter-spacing:0.430px;">&gt; Response</span>
<div class="b" style="left:958px;top:176px;width:454px;height:1px;background:#2f3133;"></div>
<div class="b" style="left:1117px;top:174px;width:92px;height:3px;background:#4a8fd6;"></div>
<span class="t" style="left:970.20px;top:177px;font-size:11.5px;color:#bbbbbb;letter-spacing:0.400px;">Table</span>
<span class="t" style="left:1024.00px;top:177px;font-size:11.5px;color:#bbbbbb;letter-spacing:0.477px;">Text</span>
<div class="b" style="left:958px;top:208.5px;width:454px;height:1.5px;background:#2f3133;"></div>
<div class="b" style="left:958px;top:206px;width:54px;height:3px;background:#4a8fd6;"></div>
<svg class="b" style="left:966px;top:216px;" width="12" height="12" viewBox="0 0 12 12"><path d="M6 0.8V11.1M0.8 5.95H11.2" stroke="#cfd1d3" stroke-width="2.1"/></svg>
<div class="b" style="left:993px;top:221px;width:10px;height:2.1px;background:#5e6163;"></div>
<svg class="b" style="left:1017px;top:215.5px;" width="16" height="15" viewBox="0 0 16 15"><path d="M0 6.4C1.8 2.4 4.6 0.5 7.4 0.5C10.4 0.5 12.8 2.6 14 6.2L14 10H8C4.6 11.4 1.6 9.6 0 6.4Z" fill="#606365"/><circle cx="7.4" cy="6" r="2.9" fill="none" stroke="#3c3f41" stroke-width="1.3"/><rect x="7.6" y="6.3" width="7.6" height="8.2" fill="#3c3f41"/><rect x="8.2" y="6.9" width="6.8" height="7.6" fill="#606365"/><path d="M9.6 9.3H13.6M9.6 11.5H13.6" stroke="#3c3f41" stroke-width="1"/></svg>
<div class="b" style="left:958px;top:233.8px;width:454px;height:1.4px;background:#2f3133;"></div>
<div class="b" style="left:959px;top:235px;width:452px;height:24px;background:#474a4c;"></div>
<div class="b" style="left:959px;top:258.5px;width:452px;height:1px;background:#2f3133;"></div>
<div class="b" style="left:987px;top:236px;width:1px;height:22px;background:#2f3234;"></div>
<div class="b" style="left:1050px;top:236px;width:1px;height:22px;background:#2f3234;"></div>
<div class="b" style="left:1151px;top:236px;width:1px;height:22px;background:#2f3234;"></div>
<div class="b" style="left:1291px;top:236px;width:1px;height:22px;background:#2f3234;"></div>
<span class="t" style="left:995.40px;top:232px;font-size:11px;color:#bbbbbb;letter-spacing:0.035px;">Type</span>
<span class="t" style="left:1058.00px;top:232px;font-size:11px;color:#bbbbbb;letter-spacing:-0.156px;">Key</span>
<span class="t" style="left:1159.00px;top:232px;font-size:11px;color:#bbbbbb;letter-spacing:0.134px;">Value</span>
<span class="t" style="left:1299.00px;top:232px;font-size:11px;color:#bbbbbb;letter-spacing:0.270px;">Description</span>
<div class="b" style="left:959px;top:279px;width:452px;height:1px;background:#505456;"></div>
<div class="b" style="left:986px;top:259px;width:1px;height:21px;background:#505456;"></div>
<div class="b" style="left:1049px;top:259px;width:1px;height:21px;background:#505456;"></div>
<div class="b" style="left:1150px;top:259px;width:1px;height:21px;background:#505456;"></div>
<div class="b" style="left:1290px;top:259px;width:1px;height:21px;background:#505456;"></div>
<div class="b" style="left:959px;top:299px;width:452px;height:1px;background:#505456;"></div>
<div class="b" style="left:986px;top:279px;width:1px;height:21px;background:#505456;"></div>
<div class="b" style="left:1049px;top:279px;width:1px;height:21px;background:#505456;"></div>
<div class="b" style="left:1150px;top:279px;width:1px;height:21px;background:#505456;"></div>
<div class="b" style="left:1290px;top:279px;width:1px;height:21px;background:#505456;"></div>
<div class="b" style="left:1410px;top:259px;width:1px;height:41px;background:#505456;"></div>
<svg class="b" style="left:962px;top:240px;" width="14" height="14" viewBox="0 0 14 14"><rect x="0.5" y="0.5" width="13" height="13" rx="2" fill="#43494a" stroke="#6b6e70"/><path d="M3.2 7.2L6 10L10.8 3.6" fill="none" stroke="#bdbfc1" stroke-width="1.6"/></svg>
<svg class="b" style="left:962px;top:262px;" width="14" height="14" viewBox="0 0 14 14"><rect x="0.5" y="0.5" width="13" height="13" rx="2" fill="#43494a" stroke="#6b6e70"/><path d="M3.2 7.2L6 10L10.8 3.6" fill="none" stroke="#bdbfc1" stroke-width="1.6"/></svg>
<svg class="b" style="left:962px;top:282px;" width="14" height="14" viewBox="0 0 14 14"><rect x="0.5" y="0.5" width="13" height="13" rx="2" fill="#43494a" stroke="#6b6e70"/><path d="M3.2 7.2L6 10L10.8 3.6" fill="none" stroke="#bdbfc1" stroke-width="1.6"/></svg>
<div class="b" style="left:998px;top:263px;width:12px;height:12px;background:#9da0a2;"></div>
<span class="t" style="left:1000.90px;top:254px;font-size:10px;color:#34373a;">A</span>
<svg class="b" style="left:996px;top:283px;" width="18" height="13" viewBox="0 0 18 13"><path d="M0.5 0V13M15.6 0V13" stroke="#9da0a2" stroke-width="1"/></svg>
<span class="t" style="left:997.70px;top:274px;font-size:12px;color:#a6a9ab;font-weight:bold;transform-origin:0 0;transform:scaleX(0.655);text-shadow:0.7px 0 #a6a9ab;">123</span>
<svg class="b" style="left:1030px;top:268px;" width="9" height="5" viewBox="0 0 9 5"><path d="M0 0H8.8L4.4 5Z" fill="#9da8b4"/></svg>
<svg class="b" style="left:1030px;top:288px;" width="9" height="5" viewBox="0 0 9 5"><path d="M0 0H8.8L4.4 5Z" fill="#9da8b4"/></svg>
<span class="t" style="left:1056.00px;top:256px;font-size:13.5px;color:#bbbbbb;letter-spacing:0.057px;">username</span>
<span class="t" style="left:1056.00px;top:276px;font-size:13.5px;color:#bbbbbb;letter-spacing:0.161px;">userId</span>
<span class="t" style="left:1154.50px;top:254px;font-size:12.5px;color:#bbbbbb;letter-spacing:0.434px;">James</span>
<span class="t" style="left:1154.50px;top:275px;font-size:12.5px;color:#bbbbbb;letter-spacing:0.214px;">123</span>
<span class="t" style="left:1294.50px;top:254px;font-size:12.5px;color:#bbbbbb;letter-spacing:0.531px;">User Name</span>
<span class="t" style="left:1294.50px;top:275px;font-size:12.5px;color:#bbbbbb;letter-spacing:0.458px;">User Id</span>
<div class="b" style="left:1412px;top:20px;width:13px;height:722px;background:#3c3f41;"></div>
<div class="b" style="left:1411.6px;top:20px;width:1.9px;height:722px;background:#2b2b2b;"></div>
<div class="b" style="left:1412px;top:20px;width:13px;height:104.5px;background:#2b2b2b;"></div>
<div class="b" style="left:1412px;top:20px;width:13px;height:722px;overflow:hidden">
<span class="t" style="left:17.78px;top:28.30px;font-size:11.5px;line-height:15px;color:#f0f0f0;letter-spacing:-0.201px;transform-origin:0 0;transform:rotate(90deg);text-shadow:0 0 0.6px #f0f0f0;">Fast Request</span>
<span class="t" style="left:18.28px;top:132.50px;font-size:11.5px;line-height:15px;color:#9a9da0;letter-spacing:-0.306px;transform-origin:0 0;transform:rotate(90deg);">Maven</span>
<svg class="b" style="left:3.8px;top:11.5px;" width="13" height="13" viewBox="0 0 15 15"><path d="M14.6 0.3C11.5 0.2 8.8 1.2 6.6 3.2L3 3.6L0.4 7L3.8 7.6L7.4 11.2L8 14.6L11.4 12L11.8 8.4C13.8 6.2 14.8 3.4 14.6 0.3Z" fill="#c6c6c6"/><circle cx="9.9" cy="4.85" r="1.45" fill="#2b2b2b"/><path d="M2.9 9.2L5.6 12C4.8 13.8 2.6 14.5 0.3 14.6C0.4 12.2 1.2 10.2 2.9 9.2Z" fill="#c6c6c6"/></svg>
<span class="t" style="left:3.50px;top:107px;font-size:13px;color:#9a9da0;font-weight:bold;font-style:italic;">m</span>
</div>
<div class="b" style="left:0px;top:742.3px;width:1425px;height:15px;background:#3c3f41;"></div>
<svg class="b" style="left:23px;top:748px;" width="10" height="10" viewBox="0 0 10 10"><circle cx="2" cy="1.2" r="1.5" fill="#afb1b3"/><path d="M2 0V9" stroke="#afb1b3" stroke-width="1.6" fill="none"/><path d="M2 7.5C6.5 7.5 7.6 5.5 7.6 2.6" stroke="#afb1b3" stroke-width="1.5" fill="none"/><circle cx="7.6" cy="2.4" r="1.7" fill="#afb1b3"/></svg>
<span class="t" style="left:39.60px;top:738px;font-size:11.5px;color:#bbbbbb;letter-spacing:-0.501px;">Git</span>
<svg class="b" style="left:75px;top:748.3px;" width="11" height="10" viewBox="0 0 11 10"><path d="M0 1H2.2M3.6 1H10.4M0 5.1H2.2M3.6 5.1H10.4M0 9.2H2.2M3.6 9.2H10.4" stroke="#afb1b3" stroke-width="2"/></svg>
<span class="t" style="left:90.50px;top:738px;font-size:11.5px;color:#bbbbbb;letter-spacing:-0.754px;">TODO</span>
<svg class="b" style="left:142px;top:747px;" width="11" height="11" viewBox="0 0 11 11"><circle cx="5.4" cy="5.4" r="5.2" fill="#afb1b3"/><path d="M5.4 2.2V6.2M5.4 7.6V9" stroke="#3c3f41" stroke-width="1.6"/></svg>
<span class="t" style="left:158.30px;top:738px;font-size:11.5px;color:#bbbbbb;letter-spacing:-0.197px;">Problems</span>
<svg class="b" style="left:228px;top:747px;" width="12" height="11" viewBox="0 0 12 11"><ellipse cx="5.6" cy="6.4" rx="3.6" ry="4.8" fill="#afb1b3"/><path d="M0 3.6L11.2 9.2M11.2 3.6L0 9.2M0 6.4H11.2M3 0L5 3M8.4 0L6.2 3" stroke="#afb1b3" stroke-width="1.1"/></svg>
<span class="t" style="left:244.20px;top:738px;font-size:11.5px;color:#bbbbbb;letter-spacing:-0.118px;">Debug</span>
<svg class="b" style="left:299px;top:748px;" width="12" height="10" viewBox="0 0 12 10"><rect x="0" y="0" width="11.4" height="10" fill="#afb1b3"/><path d="M2 2.4L5 5L2 7.6" stroke="#3c3f41" stroke-width="1.3" fill="none"/><path d="M6 8H9.6" stroke="#3c3f41" stroke-width="1.2"/></svg>
<span class="t" style="left:315.00px;top:738px;font-size:11.5px;color:#bbbbbb;letter-spacing:-0.059px;">Terminal</span>
<svg class="b" style="left:378px;top:746px;" width="14" height="12" viewBox="0 0 14 12"><path d="M2.6 4L6.4 0.6L8.2 2.6L7 3.8L13.6 10.6L12 12.4L5.6 5.6L4.6 6.4Z" fill="#afb1b3"/></svg>
<span class="t" style="left:395.30px;top:738px;font-size:11.5px;color:#bbbbbb;letter-spacing:-0.216px;">Build</span>
<svg class="b" style="left:441px;top:748px;" width="14" height="10" viewBox="0 0 14 10"><path d="M7 0L13.6 3.2L7 6.4L0.4 3.2Z" fill="#afb1b3"/><path d="M1 6L7 9L13 6" stroke="#afb1b3" stroke-width="1.4" fill="none"/></svg>
<span class="t" style="left:458.30px;top:738px;font-size:11.5px;color:#bbbbbb;letter-spacing:-0.044px;">Dependencies</span>
<svg class="b" style="left:1335px;top:747px;" width="13" height="13" viewBox="0 0 13 13"><circle cx="6.3" cy="6.3" r="6.3" fill="#499c54"/></svg>
<span class="t" style="left:1339.20px;top:740px;font-size:10px;color:#e8e8e8;font-weight:bold;">1</span>
<span class="t" style="left:1352.30px;top:738px;font-size:11.5px;color:#bbbbbb;letter-spacing:-0.200px;">Event Log</span>
<div class="b" style="left:63px;top:194px;width:233.5px;height:36px;background:#4b4d4f;border:1px solid #5e6163;border-radius:3px;box-sizing:border-box;"></div>
<span class="t" style="left:73.00px;top:198px;font-size:12.5px;color:#c4c4c4;letter-spacing:0.642px;">Show all apis of UserApiController</span>
<svg class="b" style="left:26px;top:186px;" width="50" height="50" viewBox="0 0 50 50"><defs><clipPath id="hc"><circle cx="24.9" cy="24" r="23.1"/></clipPath></defs><circle cx="24.9" cy="24" r="23.1" fill="rgba(52,128,134,0.78)"/><rect x="37.5" y="8.5" width="14" height="35" fill="rgba(134,100,100,0.4)" clip-path="url(#hc)"/><circle cx="24.9" cy="24" r="23.1" fill="none" stroke="#1fe3ea" stroke-width="1.6" stroke-dasharray="14 6.734" stroke-dashoffset="7"/><circle cx="24.6" cy="22.7" r="9.3" fill="rgba(60,140,140,0.5)" stroke="#f2f2f2" stroke-width="1.1"/><path d="M21.8 24.4C23.2 21.6 27 19.4 31.6 19.6C33.4 21.6 33.6 25.4 31.8 27.6L26 28.4Z" fill="#35b87a"/><circle cx="29.6" cy="23.4" r="1.5" fill="#4f8f93"/><g transform="translate(18.6,25.6) rotate(-8 5 8)"><path d="M3.6 1.2C3.6 -0.2 5.8 -0.2 5.8 1.2V5.6C6.4 4.9 7.8 5.1 7.9 6.2C8.5 5.6 9.9 5.9 9.9 7C10.5 6.5 11.9 6.8 11.9 8V10.8C11.9 12.6 11.1 13.8 10.6 14.8H5.2C4.2 13 1.8 10.6 0.6 9C-0.2 7.8 1.4 6.9 2.4 8L3.6 9.3Z" fill="#ffffff" stroke="#111" stroke-width="0.9" stroke-linejoin="round"/><path d="M6.4 9.4V12.6M8.2 9.4V12.6M10 9.4V12.6" stroke="#111" stroke-width="0.7"/></g></svg>
</body></html>
